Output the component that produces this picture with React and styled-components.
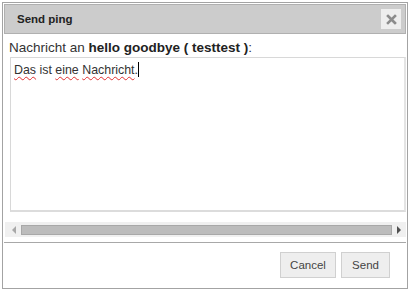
import React from 'react';
import styled, { createGlobalStyle } from 'styled-components';

const Global = createGlobalStyle`
  body {
    margin: 0;
    background: #fff;
    font-family: "Liberation Sans", Arial, sans-serif;
  }
`;

const Dialog = styled.div`
  margin: 2px;
  width: 406px;
  height: 287px;
  box-sizing: border-box;
  border: 1px solid #a3a3a3;
  padding: 1px;
  display: flex;
  flex-direction: column;
`;

const TitleBar = styled.div`
  height: 30px;
  box-sizing: border-box;
  background: #cccccc;
  border: 1px solid #b0b0b0;
  display: flex;
  align-items: center;
  justify-content: space-between;
  padding: 0 4px 0 12px;
`;

const Title = styled.span`
  font-weight: bold;
  font-size: 11.5px;
  color: #222;
`;

const CloseButton = styled.button`
  width: 20px;
  height: 20px;
  border: none;
  background: #eeeeee;
  padding: 0;
  display: flex;
  align-items: center;
  justify-content: center;
`;

const Body = styled.div`
  padding: 5px 0 0 1px;
  display: flex;
  flex-direction: column;
`;

const Label = styled.div`
  font-size: 13.5px;
  color: #333;
  line-height: 17px;
  margin-left: 4px;
  b { color: #222; }
`;

const Editor = styled.div`
  margin: 1px 0 0 5px;
  height: 155px;
  box-sizing: border-box;
  border: 1px solid #d8d8d8;
  border-bottom: 2px solid #dcdcdc;
  border-right: 2px solid #e4e4e4;
  font-size: 12.4px;
  color: #333;
  padding: 4px 3px;
`;

const Misspelled = styled.span`
  text-decoration: underline wavy #e03030;
  text-decoration-thickness: 1px;
  text-underline-offset: 2px;
`;

const Caret = styled.span`
  display: inline-block;
  width: 1px;
  height: 15px;
  background: #000;
  vertical-align: -3px;
`;

const ScrollBar = styled.div`
  margin: 10px 0 0 0;
  height: 15px;
  background: #f0f0f0;
  display: flex;
  align-items: center;
  gap: 5px;
  padding: 0 5px 0 7px;
`;

const Thumb = styled.div`
  flex: 1;
  height: 10px;
  box-sizing: border-box;
  background: #bcbcbc;
  border: 1px solid #a8a8a8;
`;

const Arrow = styled.span`
  width: 0;
  height: 0;
  border-top: 4px solid transparent;
  border-bottom: 4px solid transparent;
  ${p => p.dir === 'left'
    ? 'border-right: 4px solid #a8a8a8;'
    : 'border-left: 4px solid #505050;'}
`;

const Footer = styled.div`
  margin-top: 5px;
  border-top: 1px solid #a8a8a8;
  display: flex;
  justify-content: flex-end;
  gap: 5px;
  padding: 9px 16px 0 0;
`;

const Button = styled.button`
  height: 26px;
  width: ${p => p.w}px;
  padding: 0;
  background: #eeeeee;
  border: 1px solid #d0d0d0;
  font-family: "Liberation Sans", Arial, sans-serif;
  font-size: 11.5px;
  color: #444;
`;

export default function App() {
  return (
    <>
      <Global />
      <Dialog>
        <TitleBar>
          <Title>Send ping</Title>
          <CloseButton>
            <svg width="11" height="11" viewBox="0 0 11 11">
              <path d="M2 2 L9 9 M9 2 L2 9" stroke="#8c8c8c" strokeWidth="2.6" strokeLinecap="square" />
            </svg>
          </CloseButton>
        </TitleBar>
        <Body>
          <Label>Nachricht an <b>hello goodbye ( testtest )</b>:</Label>
          <Editor>
            <Misspelled>Das</Misspelled> ist <Misspelled>eine</Misspelled> <Misspelled>Nachricht</Misspelled>.<Caret />
          </Editor>
          <ScrollBar>
            <Arrow dir="left" />
            <Thumb />
            <Arrow dir="right" />
          </ScrollBar>
        </Body>
        <Footer>
          <Button w={56}>Cancel</Button>
          <Button w={49}>Send</Button>
        </Footer>
      </Dialog>
    </>
  );
}
